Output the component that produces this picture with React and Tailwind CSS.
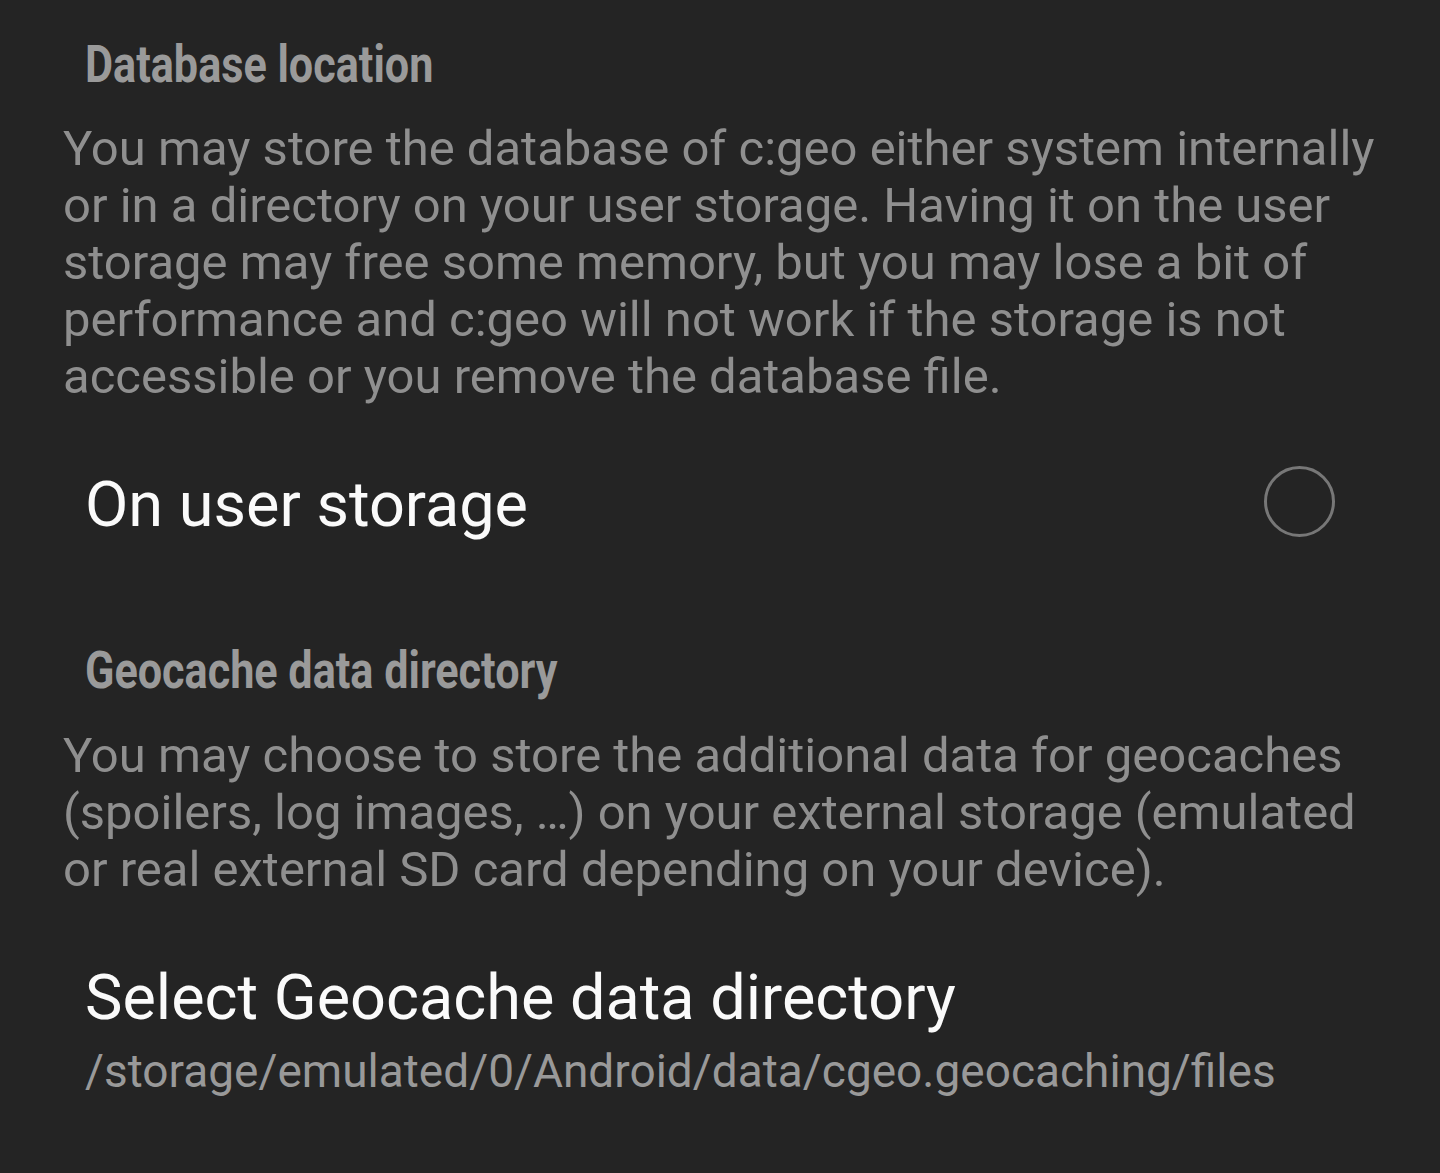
function Heading({ children }) {
  return (
    <h2 className="pl-[85px] text-[52px] leading-[56px] font-bold text-[#9a9a9a] whitespace-nowrap">
      <span className="inline-block origin-left scale-x-[0.83]">{children}</span>
    </h2>
  )
}

export default function App() {
  return (
    <div className="min-h-[1173px] w-[1440px] bg-[#242424] font-['Roboto',sans-serif] overflow-hidden">
      <section className="pt-[37px]">
        <Heading>Database location</Heading>
        <p className="mt-[27px] pl-[63px] pr-[40px] text-[49px] leading-[57px] text-[#8f8f8f]">
          You may store the database of c:geo either system internally or in a directory on your user storage. Having it on the user storage may free some memory, but you may lose a bit of performance and c:geo will not work if the storage is not accessible or you remove the database file.
        </p>
        <div className="flex items-center justify-between pl-[85px] pr-[105px] mt-[55px] h-[90px]">
          <span className="text-[63px] leading-[72px] text-[#fafafa]">On user storage</span>
          <span className="mb-[8px] w-[71px] h-[71px] rounded-full border-[3px] border-[#777777]" />
        </div>
      </section>
      <section className="mt-[93px]">
        <Heading>Geocache data directory</Heading>
        <p className="mt-[28px] pl-[63px] pr-[40px] text-[49px] leading-[57px] text-[#8f8f8f]">
          You may choose to store the additional data for geocaches (spoilers, log images, …) on your external storage (emulated or real external SD card depending on your device).
        </p>
        <div className="pl-[85px] mt-[64px]">
          <div className="text-[63px] leading-[72px] text-[#fafafa]">Select Geocache data directory</div>
          <div className="mt-[7px] text-[46px] leading-[60px] text-[#999999]">/storage/emulated/0/Android/data/cgeo.geocaching/files</div>
        </div>
      </section>
    </div>
  )
}
